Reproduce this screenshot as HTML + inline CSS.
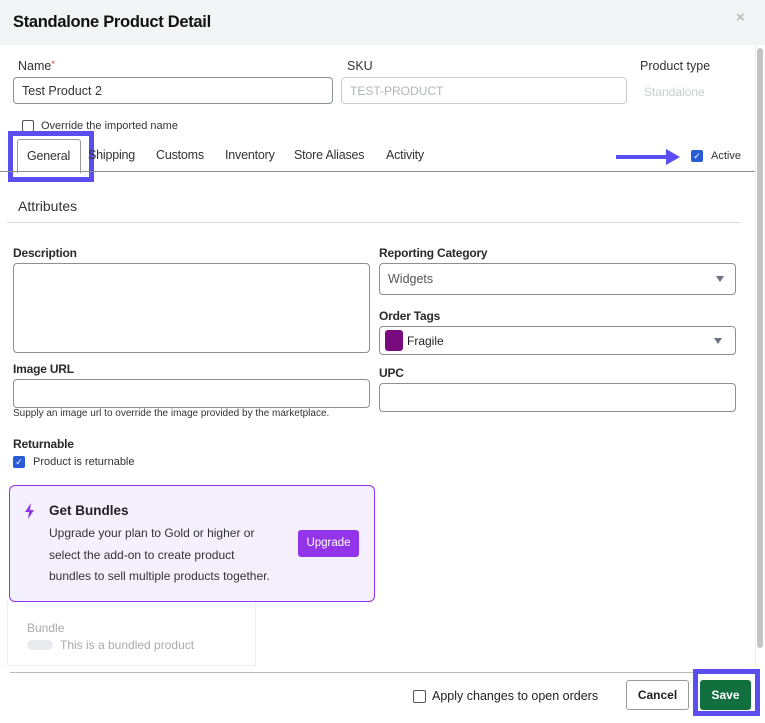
<!DOCTYPE html>
<html><head><style>
*{box-sizing:border-box;margin:0;padding:0}
body{width:765px;height:723px;overflow:hidden;background:#fff;font-family:"Liberation Sans",sans-serif;color:#222;position:relative}
.a{position:absolute;white-space:nowrap}
.inp{position:absolute;border:1px solid #8a8f98;border-radius:4px;background:#fff}
.lbl{position:absolute;font-size:12px;font-weight:bold;color:#2a2a2a;letter-spacing:-0.2px}
.cb{position:absolute;width:12px;height:12px;border:1px solid #555;border-radius:2px;background:#fff}
.cbc{position:absolute;width:12px;height:12px;border-radius:2px;background:#2a5bd7;color:#fff;font-size:9px;text-align:center;line-height:12px}
.tab{position:absolute;top:148px;font-size:12.5px;color:#333;letter-spacing:-0.2px}
.caret{position:absolute;width:0;height:0;border-left:4px solid transparent;border-right:4px solid transparent;border-top:6px solid #6b7280}
</style></head><body>
<div class="a" style="left:0;top:0;width:765px;height:45px;background:#f3f4f6"></div>
<div class="a" style="left:13px;top:13px;font-size:16.5px;font-weight:bold;color:#111;letter-spacing:-0.3px">Standalone Product Detail</div>
<div class="a" style="left:736px;top:9px;font-size:15px;color:#b8bcc4;font-weight:bold">×</div>
<div class="a" style="left:755px;top:45px;width:10px;height:630px;background:#fff;border-left:1px solid #eee"></div>
<div class="a" style="left:757px;top:48px;width:6px;height:600px;background:#c4c4c4;border-radius:3px"></div>

<div class="a" style="left:18px;top:59px;font-size:12.5px;color:#333">Name<span style="color:#e33;font-size:9px;vertical-align:top">*</span></div>
<div class="a" style="left:347px;top:59px;font-size:12.5px;color:#333">SKU</div>
<div class="a" style="left:640px;top:59px;font-size:12.5px;color:#333">Product type</div>
<div class="inp" style="left:13px;top:77px;width:320px;height:27px"></div>
<div class="a" style="left:22px;top:84px;font-size:12.5px;color:#333">Test Product 2</div>
<div class="inp" style="left:341px;top:77px;width:286px;height:27px;border-color:#ccc"></div>
<div class="a" style="left:350px;top:84px;font-size:12px;color:#b0b4ba">TEST-PRODUCT</div>
<div class="a" style="left:644px;top:85px;font-size:12px;color:#c8ccd2">Standalone</div>
<div class="cb" style="left:22px;top:120px"></div>
<div class="a" style="left:41px;top:120px;font-size:11px;color:#333">Override the imported name</div>

<div class="a" style="left:8px;top:131px;width:86px;height:51px;border:5px solid #5b4ef0"></div>
<div class="a" style="left:17px;top:139px;width:64px;height:34px;border:1px solid #999;border-bottom:none;border-radius:3px 3px 0 0;background:#fff"></div>
<div class="tab" style="left:27px;top:149px">General</div>
<div class="tab" style="left:88px">Shipping</div>
<div class="tab" style="left:156px">Customs</div>
<div class="tab" style="left:225px">Inventory</div>
<div class="tab" style="left:294px">Store Aliases</div>
<div class="tab" style="left:386px">Activity</div>
<div class="a" style="left:0;top:171px;width:755px;height:1px;background:#8a8f98"></div>
<svg class="a" style="left:614px;top:146px" width="68" height="22"><path d="M2 9h50v-6l14 8-14 8v-6H2z" fill="#5b4ef0"/></svg>
<div class="cbc" style="left:691px;top:150px">✓</div>
<div class="a" style="left:711px;top:150px;font-size:11px;color:#333">Active</div>

<div class="a" style="left:18px;top:198px;font-size:14px;color:#333">Attributes</div>
<div class="a" style="left:7px;top:222px;width:734px;height:1px;background:#ddd"></div>

<div class="lbl" style="left:13px;top:246px">Description</div>
<div class="inp" style="left:13px;top:263px;width:357px;height:90px"></div>
<div class="lbl" style="left:13px;top:362px">Image URL</div>
<div class="inp" style="left:13px;top:379px;width:357px;height:29px"></div>
<div class="a" style="left:13px;top:408px;font-size:10px;color:#333">Supply an image url to override the image provided by the marketplace.</div>
<div class="lbl" style="left:13px;top:437px">Returnable</div>
<div class="cbc" style="left:13px;top:456px">✓</div>
<div class="a" style="left:33px;top:456px;font-size:11px;color:#333">Product is returnable</div>

<div class="lbl" style="left:379px;top:246px">Reporting Category</div>
<div class="inp" style="left:379px;top:263px;width:357px;height:32px"></div>
<div class="a" style="left:388px;top:272px;font-size:12.5px;color:#555">Widgets</div>
<div class="caret" style="left:716px;top:276px"></div>
<div class="lbl" style="left:379px;top:309px">Order Tags</div>
<div class="inp" style="left:379px;top:326px;width:357px;height:29px"></div>
<div class="a" style="left:385px;top:330px;width:18px;height:21px;background:#7a0a80;border-radius:3px"></div>
<div class="a" style="left:407px;top:334px;font-size:12px;color:#222">Fragile</div>
<div class="caret" style="left:714px;top:338px"></div>
<div class="lbl" style="left:379px;top:366px">UPC</div>
<div class="inp" style="left:379px;top:383px;width:357px;height:29px"></div>

<div class="a" style="left:7px;top:601px;width:249px;height:65px;border:1px solid #eee;border-top:none"></div>
<div class="a" style="left:9px;top:485px;width:366px;height:117px;background:#f4f0fe;border:1px solid #9333ea;border-radius:6px"></div>
<svg class="a" style="left:24px;top:503px" width="12" height="16"><path d="M7 0L1 9h4l-1 7 6-9H6z" fill="#9333ea"/></svg>
<div class="a" style="left:49px;top:503px;font-size:13.5px;font-weight:bold;color:#222">Get Bundles</div>
<div class="a" style="left:49px;top:523px;font-size:12px;color:#333;line-height:21.5px">Upgrade your plan to Gold or higher or<br>select the add-on to create product<br>bundles to sell multiple products together.</div>
<div class="a" style="left:298px;top:530px;width:61px;height:27px;background:#9333ea;border-radius:3px;color:#fff;font-size:11.5px;text-align:center;padding-top:7px;line-height:13px">Upgrade</div>
<div class="a" style="left:27px;top:621px;font-size:12px;color:#aaa">Bundle</div>
<div class="a" style="left:27px;top:640px;width:26px;height:10px;border-radius:5px;background:#e9ebee"></div>
<div class="a" style="left:60px;top:638px;font-size:12px;color:#aaa">This is a bundled product</div>

<div class="a" style="left:10px;top:672px;width:745px;height:1px;background:#b5bac2"></div>
<div class="cb" style="left:413px;top:690px;width:13px;height:13px"></div>
<div class="a" style="left:432px;top:689px;font-size:12.5px;color:#222">Apply changes to open orders</div>
<div class="a" style="left:626px;top:680px;width:63px;height:30px;border:1px solid #999;border-radius:3px;font-size:12px;font-weight:bold;text-align:center;line-height:28px">Cancel</div>
<div class="a" style="left:693px;top:669px;width:67px;height:47px;border:5px solid #5b4ef0"></div>
<div class="a" style="left:700px;top:680px;width:51px;height:30px;background:#12703f;border-radius:3px;color:#fff;font-size:12px;font-weight:bold;text-align:center;line-height:30px">Save</div>
</body></html>
